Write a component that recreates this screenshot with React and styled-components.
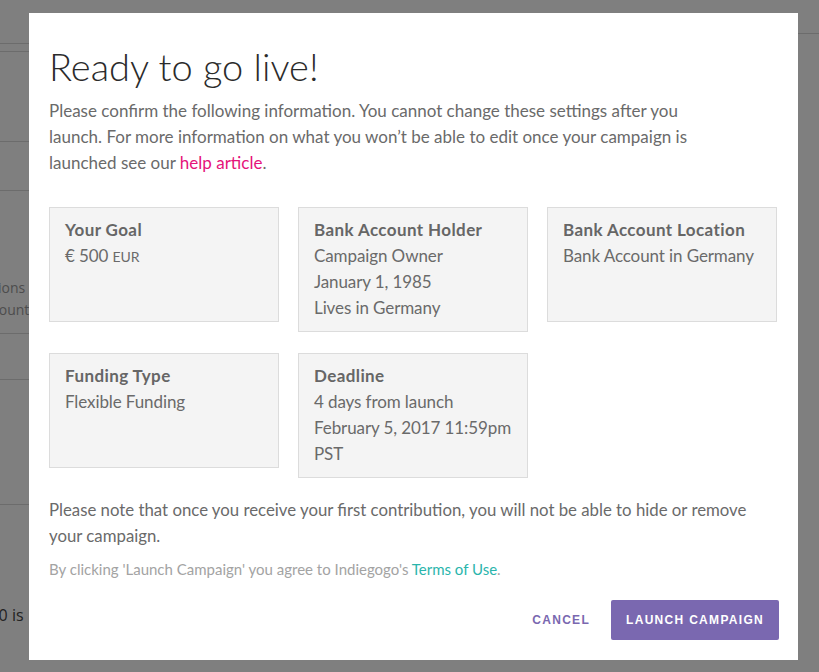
import React from 'react';
import styled, { createGlobalStyle } from 'styled-components';

const GlobalStyle = createGlobalStyle`
  html, body {
    margin: 0;
    padding: 0;
    height: 100%;
    overflow: hidden;
  }
  body {
    font-family: Lato, "Liberation Sans", Arial, sans-serif;
    background: #7f7f7f;
  }
`;

/* page behind the overlay */
const Page = styled.div`
  display: flex;
  width: 819px;
  height: 672px;
  background: #7f7f7f;
`;

const LeftPane = styled.div`
  width: 360px;
  display: flex;
  flex-direction: column;
  overflow: hidden;
`;

const RightPane = styled.div`
  flex: 1;
  padding-top: 33px;
`;

const PageRow = styled.div`
  height: ${(p) => p.h}px;
  border-bottom: ${(p) => (p.last ? 'none' : '1px solid #6c6c6c')};
  box-sizing: border-box;
  display: flex;
  flex-direction: column;
  justify-content: ${(p) => (p.bottom ? 'flex-end' : 'flex-start')};
  padding-bottom: ${(p) => (p.bottom ? p.bottom : 0)}px;
`;

const PageText = styled.span`
  font-family: "Open Sans", Roboto, sans-serif;
  font-size: ${(p) => (p.dark ? 16 : 14)}px;
  line-height: 22px;
  color: ${(p) => (p.dark ? '#222' : '#4d4d4d')};
  white-space: nowrap;
  margin-left: ${(p) => p.shift || 0}px;
`;

const HeaderLine = styled.div`
  border-top: 1px solid #6c6c6c;
`;

/* modal */
const Overlay = styled.div`
  position: fixed;
  inset: 0;
`;

const Modal = styled.div`
  position: absolute;
  top: 13px;
  left: 29px;
  width: 769px;
  height: 647px;
  box-sizing: border-box;
  background: #fff;
  padding: 12px 19px 20px 20px;
  display: flex;
  flex-direction: column;
`;

const Title = styled.h1`
  margin: 19px 0 0;
  font-size: 38px;
  line-height: 44px;
  font-weight: 300;
  color: #2b2b2b;
`;

const Intro = styled.p`
  margin: 10px 0 0;
  font-size: 17px;
  line-height: 26px;
  color: #6a6a6a;
`;

const Link = styled.a`
  color: ${(p) => p.color};
  text-decoration: none;
`;

const Cards = styled.div`
  margin-top: 31px;
  display: grid;
  grid-template-columns: 230px 230px 230px;
  column-gap: 19px;
  row-gap: 21px;
  align-items: start;
`;

const Card = styled.div`
  min-height: 115px;
  box-sizing: border-box;
  background: #f4f4f4;
  border: 1px solid #dcdcdc;
  padding: 9px 15px 10px;
  font-size: 17px;
  line-height: 26px;
  color: #6a6a6a;
`;

const CardTitle = styled.div`
  font-weight: 700;
  color: #666;
  letter-spacing: 0.4px;
`;

const CardLine = styled.div`
  white-space: nowrap;
  letter-spacing: -0.1px;
`;

const Small = styled.span`
  font-size: 14px;
`;

const Note = styled.p`
  margin: 19px 0 0;
  font-size: 16.8px;
  line-height: 26px;
  color: #6a6a6a;
`;

const Terms = styled.p`
  margin: 10px 0 0;
  font-size: 15px;
  line-height: 20px;
  color: #a3a3a3;
`;

const Actions = styled.div`
  margin-top: auto;
  display: flex;
  justify-content: flex-end;
  align-items: center;
  gap: 6px;
`;

const Button = styled.button`
  height: 40px;
  padding: 0 15px;
  border: none;
  border-radius: 2px;
  background: ${(p) => (p.primary ? '#7a68b0' : 'transparent')};
  color: ${(p) => (p.primary ? '#fff' : '#7a68b0')};
  font-family: "Liberation Sans", Arial, sans-serif;
  font-size: 12px;
  font-weight: 700;
  letter-spacing: 1.3px;
  cursor: pointer;
`;

const cards = [
  { title: 'Your Goal', lines: [<>€ 500 <Small>EUR</Small></>] },
  { title: 'Bank Account Holder', lines: ['Campaign Owner', 'January 1, 1985', 'Lives in Germany'] },
  { title: 'Bank Account Location', lines: ['Bank Account in Germany'] },
  { title: 'Funding Type', lines: ['Flexible Funding'] },
  { title: 'Deadline', lines: ['4 days from launch', 'February 5, 2017 11:59pm', 'PST'] },
];

export default function App() {
  return (
    <>
      <GlobalStyle />
      <Page>
        <LeftPane>
          <PageRow h={44} />
          <PageRow h={8} />
          <PageRow h={90} />
          <PageRow h={49} />
          <PageRow h={143} bottom={12}>
            <PageText shift={-24}>options</PageText>
            <PageText shift={-8}>country</PageText>
          </PageRow>
          <PageRow h={46} />
          <PageRow h={125} />
          <PageRow h={167} last bottom={46}>
            <PageText dark shift={-33}>€ 500 is</PageText>
          </PageRow>
        </LeftPane>
        <RightPane>
          <HeaderLine />
        </RightPane>
      </Page>
      <Overlay>
        <Modal role="dialog" aria-labelledby="launch-title">
          <Title id="launch-title">Ready to go live!</Title>
          <Intro>
            Please confirm the following information. You cannot change these settings after you
            <br />
            launch. For more information on what you won’t be able to edit once your campaign is
            <br />
            launched see our <Link href="#" color="#e5137a">help article</Link>.
          </Intro>
          <Cards>
            {cards.map((c) => (
              <Card key={c.title}>
                <CardTitle>{c.title}</CardTitle>
                {c.lines.map((l, i) => (
                  <CardLine key={i}>{l}</CardLine>
                ))}
              </Card>
            ))}
          </Cards>
          <Note>
            Please note that once you receive your first contribution, you will not be able to hide or remove
            <br />
            your campaign.
          </Note>
          <Terms>
            By clicking 'Launch Campaign' you agree to Indiegogo's{' '}
            <Link href="#" color="#2ab5ac">Terms of Use</Link>.
          </Terms>
          <Actions>
            <Button>CANCEL</Button>
            <Button primary>LAUNCH CAMPAIGN</Button>
          </Actions>
        </Modal>
      </Overlay>
    </>
  );
}
